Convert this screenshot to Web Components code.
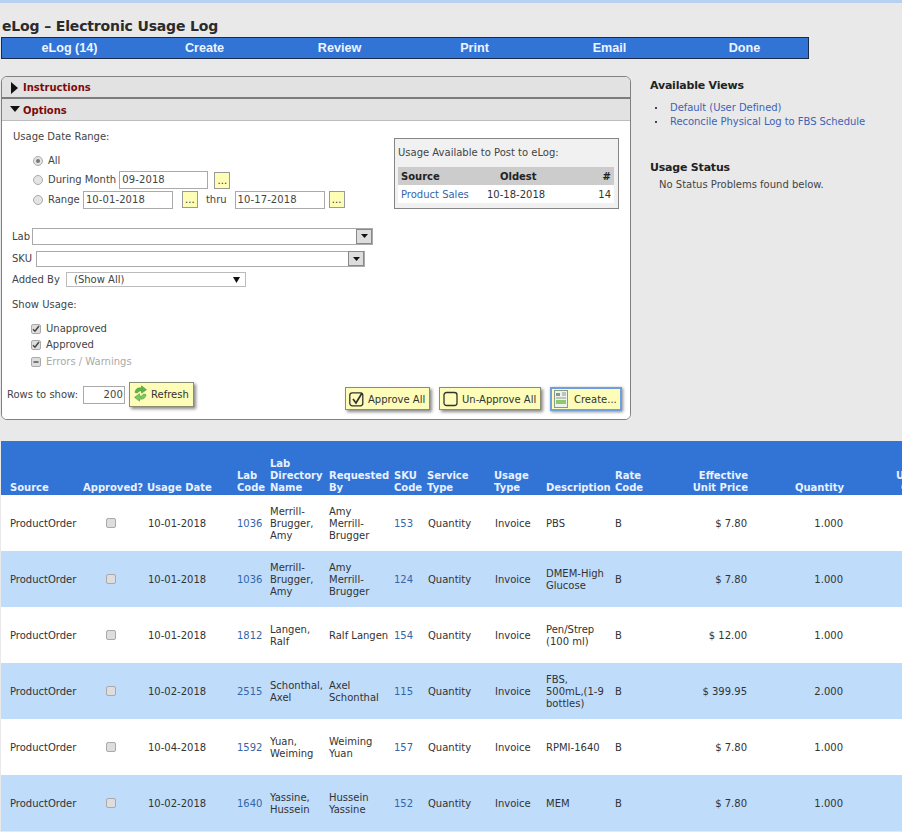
<!DOCTYPE html>
<html lang="en"><head><meta charset="utf-8"><title>eLog</title>
<style>
html,body{margin:0;padding:0;background:#e9e9e9;overflow:hidden}
body{font:10px/12px "DejaVu Sans",Verdana,sans-serif;color:#333;width:902px;height:832px}
</style></head><body>
<elog-page></elog-page>
<script>
function el(name,css,html,init){
  customElements.define(name,class extends HTMLElement{
    connectedCallback(){
      if(this.shadowRoot)return;
      const s=this.attachShadow({mode:'open'});
      s.innerHTML='<style>'+css+'</style>'+(typeof html==='function'?html(this):html);
    }
  });
}
el('elog-nav',`:host{display:flex;box-sizing:border-box;width:808px;height:22px;margin-left:1px;background:#3174d6;border:1px solid #1c2c46}
span{flex:0 0 135px;text-align:center;color:#eef4ff;font:bold 12.600px/20px "Liberation Sans",Arial,sans-serif}`,
 ()=>['eLog (14)','Create','Review','Print','Email','Done'].map(t=>`<span>${t}</span>`).join(''));

el('elog-section',`:host{display:flex;align-items:center;box-sizing:border-box;background:#e2e2e2;color:#7c0a0a;font-weight:bold;font-size:10px;padding-top:2px}
svg{flex:none}
:host([first]){height:22px;padding-left:8px;border-radius:5px 5px 0 0;border-bottom:2px solid #7d7d7d}
:host([first]) svg{margin-right:5px}
:host(:not([first])){height:22px;padding-left:8px;border-bottom:1px solid #bdbdbd}
:host(:not([first])) svg{margin-right:3px}`,
 h=>(h.hasAttribute('first')
  ?'<svg width="8" height="12" viewBox="0 0 8 12"><path d="M1 0l7 6-7 6z" fill="#111"/></svg>'
  :'<svg width="10" height="8" viewBox="0 0 10 8" style="margin-top:-3px"><path d="M0 1h10L5 7z" fill="#111"/></svg>')+'<slot></slot>');

el('elog-radio',`:host{display:flex;align-items:center;height:20px;padding-left:31px;white-space:nowrap;color:#444}
i{flex:none;box-sizing:border-box;width:10px;height:10px;border-radius:50%;border:1px solid #aaa;background:#e4e4e4;margin-right:5px;display:flex;align-items:center;justify-content:center}
b{width:4px;height:4px;border-radius:50%;background:#777}`,
 h=>`<i>${h.hasAttribute('checked')?'<b></b>':''}</i><slot></slot>`);

el('elog-text',`:host{display:inline-block;box-sizing:border-box;height:18px;line-height:16px;background:#fff;border:1px solid #aaa;padding-left:2px;color:#444;letter-spacing:.1px;flex:none}
:host([right]){text-align:right;padding:0 1px 0 0}`,'<slot></slot>');

el('elog-dots',`:host{display:inline-block;box-sizing:border-box;width:16px;height:17px;background:#fdfdb6;border:1px solid #999;line-height:16px;text-align:center;color:#333;flex:none}`,'...');

el('elog-combo',`:host{display:flex;box-sizing:border-box;height:17px;background:#fff;border:1px solid #aaa;align-items:center;justify-content:flex-end;flex:none}
i{box-sizing:border-box;width:16px;height:15px;background:#ddd;border:1px solid #888;display:flex;align-items:center;justify-content:center;margin-top:-1px}`,
 '<i><svg width="7" height="4" viewBox="0 0 7 4"><path d="M0 0h7L3.500 4z" fill="#111"/></svg></i>');

el('elog-select',`:host{display:flex;box-sizing:border-box;height:15px;background:#fff;border:1px solid #bbb;align-items:center;justify-content:space-between;padding:0 5px 0 7px;color:#444;flex:none}`,
 '<slot></slot><svg width="7" height="6" viewBox="0 0 7 6"><path d="M0 0h7L3.500 6z" fill="#111"/></svg>');

el('elog-check',`:host{display:flex;align-items:center;height:16px;padding-left:29px;color:#444}
:host([off]){color:#aaa}
i{flex:none;box-sizing:border-box;width:10px;height:10px;border:1px solid #aaa;border-radius:2px;background:#ddd;margin-right:5px;margin-top:-1px;display:flex}
svg{display:block}`,
 h=>`<i>${h.hasAttribute('off')
 ?'<svg width="8" height="8" viewBox="0 0 8 8"><path d="M1.500 4h5" stroke="#555" stroke-width="1.600"/></svg>'
 :'<svg width="8" height="8" viewBox="0 0 8 8"><path d="M1 4.200l2 2L7 1" fill="none" stroke="#444" stroke-width="1.500"/></svg>'}</i><slot></slot>`);

el('elog-btn',`:host{display:inline-flex;align-items:center;box-sizing:border-box;background:#fdfdb9;border:1px solid #8c8c72;box-shadow:2px 2px 3px #8a8a8a;color:#333;white-space:nowrap;flex:none;height:23px;gap:3px;padding:2px 3px 0 3px}
:host([blue]){border:2px solid #6f9fdc;box-shadow:1px 1px 3px #8a8a8a;height:24px;gap:6px;padding:1px 2px 0 2px}
svg{display:block;flex:none;margin-top:-2px}`,
 h=>{const k=h.getAttribute('icon');
  const icons={
   on:'<svg width="16" height="16" viewBox="0 0 16 16"><rect x=".8" y="1.800" width="13" height="13" rx="2.500" fill="#fdfdb9" stroke="#333" stroke-width="1.300"/><path d="M4 8l3 4 6-10" fill="none" stroke="#333" stroke-width="1.700"/></svg>',
   off:'<svg width="16" height="16" viewBox="0 0 16 16"><rect x="1" y="1.500" width="13" height="13" rx="2.500" fill="#fdfdb9" stroke="#333" stroke-width="1.300"/></svg>',
   create:'<svg width="14" height="18" viewBox="0 0 14 18"><rect x=".5" y=".5" width="13" height="17" fill="#eef2ee" stroke="#8a9a8a"/><rect x="2" y="3" width="4" height="3" fill="#7f9f7f"/><path d="M8 3h4M8 5h4M2 8h10" stroke="#8a9a8a"/><rect x="2" y="10" width="10" height="4" fill="#8fc870"/></svg>',
   refresh:'<svg width="15" height="17" viewBox="0 0 15 17"><path d="M2 7.500C2.200 4 5 2.300 8.500 3V.8L13.500 4.700 8.500 8.300V6C6.500 5.600 5 6.200 4.600 8z" fill="#5fb544" stroke="#3f8f35" stroke-width=".5"/><path d="M13 9.500C12.800 13 10 14.700 6.500 14v2.200L1.500 12.300 6.500 8.700V11C8.500 11.400 10 10.800 10.400 9z" fill="#7cc860" stroke="#3f8f35" stroke-width=".5"/></svg>'};
  return (icons[k]||'')+'<slot></slot>';});

el('elog-usage-box',`:host{display:block;box-sizing:border-box;width:225px;height:71px;margin-top:17px;border:1px solid #858585;background:#f1f1f1;padding:8px 4px 0 3px;flex:none}
p{margin:0 0 8px;color:#444}
.r{display:grid;box-sizing:border-box;grid-template-columns:86px 90px 1fr;height:18px;align-items:center;padding:2px 3px 0 3px;background:#fff}
.h{background:#ccc;font-weight:bold;color:#222}
.h span:nth-child(2){padding-left:13px}
.n{text-align:right}
a{color:#3366aa;text-decoration:none}`,
 `<p>Usage Available to Post to eLog:</p>
 <div class="r h"><span>Source</span><span>Oldest</span><span class="n">#</span></div>
 <div class="r"><a>Product Sales</a><span>10-18-2018</span><span class="n">14</span></div>`);

el('elog-options',`:host{display:block;background:#fff;height:298px;box-sizing:border-box}
.top{display:flex;justify-content:space-between;height:104px;padding-right:11px}
.lbl{height:14px;line-height:14px;color:#444;padding-left:11px}
.dates{margin-top:7px}
elog-radio{height:19.500px}
.f{display:flex;align-items:center;padding-left:10px;color:#444}
.show{margin:11px 0 9px;padding-left:10px;height:14px;line-height:14px;color:#444}
.bottom{display:flex;align-items:flex-start;margin-top:12px;padding:0 8px 0 5px;color:#444}
.bottom .l{display:flex;align-items:center;height:25px}
.bottom .g{margin-left:auto;display:flex;gap:9px;padding-top:5px}`,
`<div class="top"><div>
  <div style="height:9px"></div>
  <div class="lbl">Usage Date Range:</div>
  <div class="dates">
   <elog-radio checked>All</elog-radio>
   <elog-radio>During Month&nbsp;<elog-text style="width:89px">09-2018</elog-text><elog-dots style="margin-left:6px"></elog-dots></elog-radio>
   <elog-radio>Range&nbsp;<elog-text style="width:90px">10-01-2018</elog-text><elog-dots style="margin-left:9px"></elog-dots><span style="margin:0 8px 0 8px">thru</span><elog-text style="width:90px">10-17-2018</elog-text><elog-dots style="margin-left:4px"></elog-dots></elog-radio>
  </div></div>
  <elog-usage-box></elog-usage-box>
 </div>
 <div style="height:3px"></div>
 <div class="f" style="height:17px"><span style="width:20px">Lab</span><elog-combo style="width:341px"></elog-combo></div>
 <div style="height:6px"></div>
 <div class="f" style="height:16px"><span style="width:24px">SKU</span><elog-combo style="width:329px;height:16px"></elog-combo></div>
 <div style="height:5px"></div>
 <div class="f" style="height:15px"><span style="width:54px">Added By</span><elog-select style="width:180px">(Show All)</elog-select></div>
 <div class="show">Show Usage:</div>
 <elog-check>Unapproved</elog-check>
 <elog-check>Approved</elog-check>
 <elog-check off style="margin-top:1px">Errors / Warnings</elog-check>
 <div class="bottom">
  <div class="l"><span style="width:76px">Rows to show:</span><elog-text right style="width:42px">200</elog-text><elog-btn icon="refresh" style="margin-left:4px;height:25px;width:65px;gap:3px;padding:0 3px 0 3px">Refresh</elog-btn></div>
  <div class="g"><elog-btn icon="on" style="width:85px">Approve All</elog-btn><elog-btn icon="off" style="width:102px">Un-Approve All</elog-btn><elog-btn icon="create" blue style="width:72px">Create...</elog-btn></div>
 </div>`);

el('elog-panel',`:host{display:block;box-sizing:border-box;width:630px;flex:none;border:1px solid #808080;border-radius:6px;overflow:hidden;background:#fff}`,
 `<elog-section first>Instructions</elog-section><elog-section>Options</elog-section><elog-options></elog-options>`);

el('elog-side',`:host{display:block;margin-left:19px;padding-top:3px;white-space:nowrap;color:#444}
h3{margin:0;font:bold 11px/14px "DejaVu Sans",Verdana,sans-serif;color:#222;letter-spacing:-.2px}
ul{margin:8px 0 0;padding:0;list-style:none}
li{position:relative;padding-left:20px;height:14px;line-height:14px}
li:before{content:"";position:absolute;left:5px;top:6px;width:2px;height:2px;background:#445}
a{color:#3f62b5;text-decoration:none;letter-spacing:-.05px}
p{margin:3px 0 0 9px;line-height:14px}`,
 `<h3>Available Views</h3>
 <ul><li><a>Default (User Defined)</a></li><li><a>Reconcile Physical Log to FBS Schedule</a></li></ul>
 <h3 style="margin-top:32px">Usage Status</h3>
 <p>No Status Problems found below.</p>`);

const W=[79,64,90,33,59,65,33,67,52,69,48,91,96,130];
const H=[['Source'],['Approved?'],['Usage Date'],['Lab<br>Code'],['Lab<br>Directory<br>Name'],['Requested<br>By'],['SKU<br>Code'],['Service<br>Type'],['Usage<br>Type'],['Description'],['Rate<br>Code'],['Effective<br>Unit Price','r'],['Quantity','r'],['Usage<br>Cost','c']];
const R=[
['10-01-2018','1036','Merrill-<br>Brugger,<br>Amy','Amy<br>Merrill-<br>Brugger','153','PBS','$ 7.80','1.000'],
['10-01-2018','1036','Merrill-<br>Brugger,<br>Amy','Amy<br>Merrill-<br>Brugger','124','DMEM-High<br>Glucose','$ 7.80','1.000'],
['10-01-2018','1812','Langen,<br>Ralf','Ralf Langen','154','Pen/Strep<br>(100 ml)','$ 12.00','1.000'],
['10-02-2018','2515','Schonthal,<br>Axel','Axel<br>Schonthal','115','FBS,<br>500mL,(1-9<br>bottles)','$ 399.95','2.000'],
['10-04-2018','1592','Yuan,<br>Weiming','Weiming<br>Yuan','157','RPMI-1640','$ 7.80','1.000'],
['10-02-2018','1640','Yassine,<br>Hussein','Hussein<br>Yassine','152','MEM','$ 7.80','1.000']];

el('elog-table',`:host{display:block;margin:21px 0 0 1px;overflow:hidden;width:901px}
table{border-collapse:collapse;table-layout:fixed;width:${W.reduce((a,b)=>a+b)}px}
th{background:#3174d6;color:#e9f1ff;font-size:10px;font-weight:bold;text-align:left;vertical-align:bottom;padding:0 0 1px 3px;height:53px;line-height:12px;white-space:nowrap}
td{height:56px;padding:1px 0 0 3px;box-sizing:border-box;vertical-align:middle;white-space:nowrap;line-height:12px;color:#333}
th:first-child,td:first-child{padding-left:9px}
th.r{text-align:right;padding:0 3px 1px 0}
td.r{text-align:right;padding:1px 4px 0 0}
.c{text-align:center}
tbody tr{background:#fff}
tbody tr:nth-child(even){background:#bfdcfa}
a{color:#3366aa;text-decoration:none}
.cb{display:block;box-sizing:border-box;width:10px;height:10px;margin:-2px auto 0 23px;border:1px solid #aaa;border-radius:2px;background:#ddd}
.d{color:#333;padding-left:4px}
.s{padding-left:4px}`,
 ()=>`<table><colgroup>${W.map(w=>`<col style="width:${w}px">`).join('')}</colgroup>
 <thead><tr>${H.map(h=>`<th class="${h[1]||''}">${h[0]}</th>`).join('')}</tr></thead>
 <tbody>${R.map(r=>`<tr><td>ProductOrder</td><td><span class="cb"></span></td><td class="d">${r[0]}</td><td><a>${r[1]}</a></td><td>${r[2]}</td><td>${r[3]}</td><td><a>${r[4]}</a></td><td class="s">Quantity</td><td class="s">Invoice</td><td>${r[5]}</td><td>B</td><td class="r">${r[6]}</td><td class="r">${r[7]}</td><td></td></tr>`).join('')}</tbody></table>`);

el('elog-page',`:host{display:block;background:#e9e9e9}
.bar{height:3px;background:#b7d1f3}
h1{margin:0;padding:15px 0 0 2px;height:34px;box-sizing:border-box;font:bold 14px/17px "DejaVu Sans",Verdana,sans-serif;color:#2b2b2b;letter-spacing:-.15px}
.main{display:flex;margin:17px 0 0 1px}`,
 `<div class="bar"></div><h1>eLog – Electronic Usage Log</h1><elog-nav></elog-nav>
 <div class="main"><elog-panel></elog-panel><elog-side></elog-side></div>
 <elog-table></elog-table>`);
</script>
</body></html>
